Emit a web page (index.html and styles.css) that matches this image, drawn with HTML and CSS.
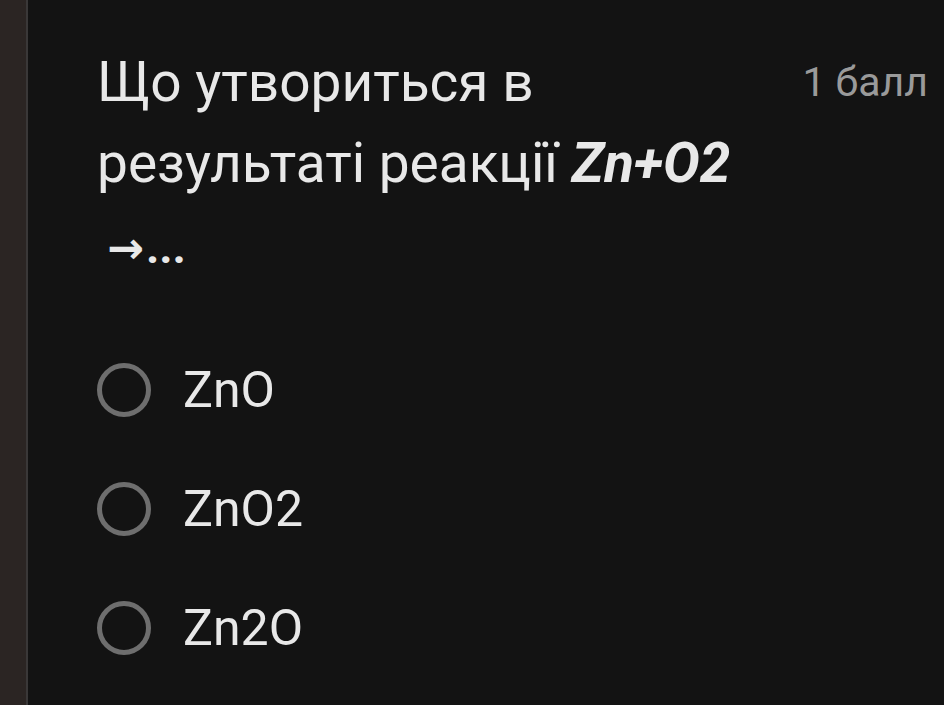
FILE: index.html
```html
<!DOCTYPE html>
<html lang="uk">
<head>
  <meta charset="UTF-8" />
  <meta name="viewport" content="width=device-width, initial-scale=1.0" />
  <title>Тест</title>
  <link rel="stylesheet" href="styles.css">
</head>
<body>
  <div class="page">
    <div class="side-strip"></div>
    <main class="question">
      <div class="question-head">
        <h2 class="question-title">Що утвориться в результаті реакції <b><i>Zn+O2</i></b> <span class="tail"><span class="arrow">→</span>...</span></h2>
        <span class="points">1 балл</span>
      </div>
      <div class="options">
        <label class="option"><span class="radio"></span><span class="option-text">ZnO</span></label>
        <label class="option"><span class="radio"></span><span class="option-text">ZnO2</span></label>
        <label class="option"><span class="radio"></span><span class="option-text">Zn2O</span></label>
      </div>
    </main>
  </div>
</body>
</html>
```

FILE: styles.css
```css
body {
  margin: 0;
  background: #131313;
  font-family: Roboto, 'Liberation Sans', sans-serif;
  color: #e8e8e8;
  height: 100vh;
  overflow: hidden;
}

.page {
  display: flex;
  height: 100%;
}

.side-strip {
  width: 26px;
  flex: none;
  background: #2b2523;
  border-right: 2px solid #3a3838;
}

.question {
  flex: 1;
  padding: 42px 0 0 69px;
}

.question-head {
  display: flex;
  justify-content: space-between;
  align-items: flex-start;
}

.question-title {
  margin: 0;
  width: 660px;
  font-size: 55px;
  font-weight: 400;
  line-height: 81px;
}

.question-title b {
  font-weight: 700;
}

.tail {
  font-size: 46px;
  font-weight: 700;
  padding-left: 10px;
}

.arrow {
  font-family: 'DejaVu Sans', sans-serif;
  font-size: 44px;
  font-weight: 700;
  margin-right: 2px;
}

.points {
  color: #9a9a9a;
  font-size: 41px;
  line-height: 81px;
  padding-right: 16px;
}

.options {
  display: flex;
  flex-direction: column;
  gap: 65px;
  margin-top: 75px;
}

.option {
  display: flex;
  align-items: center;
  gap: 32px;
}

.radio {
  width: 44px;
  height: 44px;
  border: 5px solid #6e6e6e;
  border-radius: 50%;
  flex: none;
}

.option-text {
  font-size: 50px;
  line-height: 54px;
}
```
